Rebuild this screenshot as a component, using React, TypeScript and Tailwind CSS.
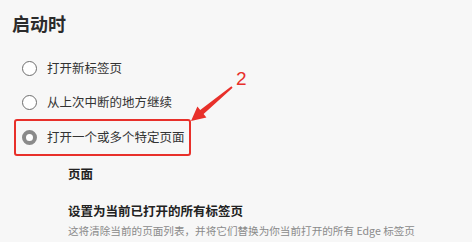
import React from "react";

type Option = {
  label: string;
  selected?: boolean;
};

const options: Option[] = [
  { label: "打开新标签页" },
  { label: "从上次中断的地方继续" },
  { label: "打开一个或多个特定页面", selected: true },
];

function Radio({ selected }: { selected?: boolean }) {
  if (selected) {
    return (
      <span className="flex h-[15px] w-[15px] shrink-0 items-center justify-center rounded-full border-[4px] border-[#8a8a8a] bg-white" />
    );
  }
  return <span className="h-[15px] w-[15px] shrink-0 rounded-full border border-[#6e6e6e] bg-white" />;
}

export default function App() {
  return (
    <div
      className="relative h-[242px] w-[472px] overflow-hidden bg-[#f7f7f7] text-[#333]"
      style={{ fontFamily: '"Noto Sans CJK SC", "Noto Sans", sans-serif' }}
    >
      <h1 className="pl-[12px] pt-[11px] text-[18px] font-bold leading-[24px] text-[#2b2b2b]">启动时</h1>

      <div className="mt-[16px] flex flex-col">
        {options.map((opt) =>
          opt.selected ? (
            <div
              key={opt.label}
              className="ml-[14px] flex h-[37px] w-[177px] items-center gap-[10px] rounded-[3px] border-2 border-[#e8302a] pl-[6px]"
            >
              <Radio selected />
              <span className="whitespace-nowrap text-[12.5px] leading-none">{opt.label}</span>
            </div>
          ) : (
            <div key={opt.label} className="flex h-[34px] items-center gap-[10px] pl-[22px]">
              <Radio />
              <span className="whitespace-nowrap text-[12.5px] leading-none">{opt.label}</span>
            </div>
          )
        )}
      </div>

      <div className="mt-[8px] pl-[68px]">
        <p className="text-[12.5px] font-bold leading-[20px] text-[#222]">页面</p>
        <p className="mt-[17px] text-[12.5px] font-bold leading-[20px] text-[#222]">设置为当前已打开的所有标签页</p>
        <p className="whitespace-nowrap text-[10.6px] leading-[20px] text-[#8a8a8a]">
          这将清除当前的页面列表，并将它们替换为你当前打开的所有 Edge 标签页
        </p>
      </div>

      {/* annotation */}
      <svg className="absolute left-0 top-0" width="472" height="242" viewBox="0 0 472 242">
        <polygon
          points="232.6,87.8 203.6,114 206.4,117.4 191,121 197.4,106.6 200.2,110 231.4,86.2"
          fill="#e8302a"
        />
      </svg>
      <span
        className="absolute left-[236px] top-[67px] text-[19px] leading-[24px] text-[#e8302a]"
        style={{ fontFamily: '"Liberation Sans", sans-serif' }}
      >
        2
      </span>
    </div>
  );
}
